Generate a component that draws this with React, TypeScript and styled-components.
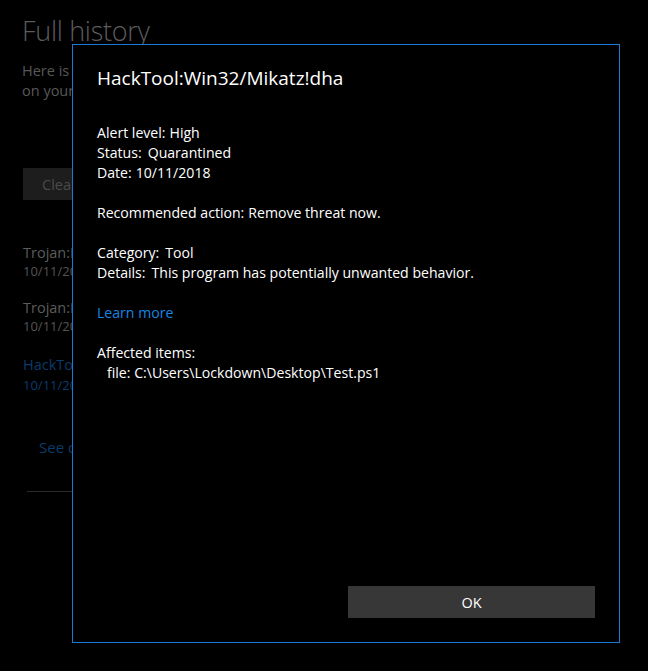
import React from "react";
import styled, { createGlobalStyle } from "styled-components";

const GlobalStyle = createGlobalStyle`
  html, body {
    margin: 0;
    padding: 0;
    background: #000;
  }
  body {
    font-family: "Open Sans", "Noto Sans", "Liberation Sans", sans-serif;
    -webkit-font-smoothing: antialiased;
  }
`;

type HistoryEntry = {
  name: string;
  date: string;
  selected?: boolean;
};

type Field = {
  label: string;
  value: string;
  wide?: boolean;
};

const history: HistoryEntry[] = [
  { name: "Trojan:PowerShell/Powersploit.H", date: "10/11/2018" },
  { name: "Trojan:PowerShell/Mimikatz.A", date: "10/11/2018" },
  { name: "HackTool:Win32/Mikatz!dha", date: "10/11/2018", selected: true },
];

const details: Field[][] = [
  [
    { label: "Alert level:", value: "High" },
    { label: "Status:", value: "Quarantined", wide: true },
    { label: "Date:", value: "10/11/2018" },
  ],
  [{ label: "Recommended action:", value: "Remove threat now." }],
  [
    { label: "Category:", value: "Tool", wide: true },
    { label: "Details:", value: "This program has potentially unwanted behavior.", wide: true },
  ],
];

const Screen = styled.div`
  position: relative;
  width: 648px;
  height: 671px;
  overflow: hidden;
  background: #000;
`;

const Page = styled.div`
  display: flex;
  flex-direction: column;
  padding: 12px 0 0 22px;
  width: 420px;
`;

const Heading = styled.h1`
  margin: 0;
  font-size: 27px;
  font-weight: 300;
  letter-spacing: -0.3px;
  line-height: 38px;
  color: #5c5c5c;
`;

const Intro = styled.p`
  margin: 11px 0 0;
  font-size: 14.5px;
  line-height: 20px;
  color: #585858;
`;

const ClearButton = styled.div`
  margin: 67px 0 0 1px;
  width: 150px;
  height: 32px;
  display: flex;
  align-items: center;
  padding-left: 19px;
  box-sizing: border-box;
  background: #1d1d1d;
  color: #4b4b4b;
  font-size: 14.5px;
`;

const HistoryList = styled.div`
  display: flex;
  flex-direction: column;
  gap: 18px;
  margin: 43px 0 0 1px;
`;

const HistoryItem = styled.div<{ $selected?: boolean }>`
  display: flex;
  flex-direction: column;
  margin-top: ${(p) => (p.$selected ? "2px" : "0")};
  color: ${(p) => (p.$selected ? "#0c3b6b" : "#5c5c5c")};
`;

const ItemName = styled.div`
  font-size: 14.5px;
  line-height: 20px;
`;

const ItemDate = styled.div<{ $selected?: boolean }>`
  font-size: 13px;
  line-height: 17px;
  margin-top: ${(p) => (p.$selected ? "2px" : "0")};
  color: ${(p) => (p.$selected ? "#0c3b6b" : "#545454")};
`;

const SeeMore = styled.div`
  margin: 43px 0 0 17px;
  font-size: 15px;
  line-height: 20px;
  color: #0c3b6b;
`;

const Divider = styled.div`
  margin: 34px 0 0 5px;
  height: 1px;
  width: 360px;
  background: #2a2a2a;
`;

const Dialog = styled.div`
  position: absolute;
  left: 72px;
  top: 44px;
  width: 548px;
  height: 599px;
  box-sizing: border-box;
  border: 1px solid #1a7ad4;
  background: #000;
  display: flex;
  flex-direction: column;
  padding: 19px 24px 24px;
  color: #fff;
`;

const Title = styled.h2`
  margin: 0;
  font-size: 19px;
  font-weight: 400;
  line-height: 28px;
  color: #fff;
`;

const Body = styled.div`
  margin-top: 31px;
  display: flex;
  flex-direction: column;
  gap: 20px;
  flex: 1;
  font-size: 14.1px;
  line-height: 20px;
`;

const Group = styled.div`
  display: flex;
  flex-direction: column;
`;

const Line = styled.div<{ $indent?: boolean }>`
  display: flex;
  padding-left: ${(p) => (p.$indent ? "10px" : "0")};
  white-space: pre;
`;

const Label = styled.span<{ $wide?: boolean }>`
  margin-right: ${(p) => (p.$wide ? "6px" : "4px")};
`;

const LearnMore = styled.a`
  color: #1a85e0;
  text-decoration: none;
  align-self: flex-start;
`;

const Footer = styled.div`
  display: grid;
  grid-template-columns: 1fr 1fr;
  gap: 4px;
`;

const OkButton = styled.button`
  grid-column: 2;
  height: 32px;
  border: none;
  background: #373737;
  color: #fff;
  font-family: inherit;
  font-size: 14.5px;
  padding: 0;
`;

export default function App() {
  return (
    <>
      <GlobalStyle />
      <Screen>
        <Page>
          <Heading>Full history</Heading>
          <Intro>
            Here is the full list of threats detected
            <br />
            on your device.
          </Intro>
          <ClearButton>Clear history</ClearButton>
          <HistoryList>
            {history.map((item) => (
              <HistoryItem key={item.name} $selected={item.selected}>
                <ItemName>{item.name}</ItemName>
                <ItemDate $selected={item.selected}>{item.date}</ItemDate>
              </HistoryItem>
            ))}
          </HistoryList>
          <SeeMore>See older items</SeeMore>
          <Divider />
        </Page>

        <Dialog>
          <Title>HackTool:Win32/Mikatz!dha</Title>
          <Body>
            {details.map((group, i) => (
              <Group key={i}>
                {group.map((field) => (
                  <Line key={field.label}>
                    <Label $wide={field.wide}>{field.label}</Label>
                    {field.value}
                  </Line>
                ))}
              </Group>
            ))}
            <LearnMore href="#">Learn more</LearnMore>
            <Group>
              <Line>Affected items:</Line>
              <Line $indent>file: C:\Users\Lockdown\Desktop\Test.ps1</Line>
            </Group>
          </Body>
          <Footer>
            <OkButton>OK</OkButton>
          </Footer>
        </Dialog>
      </Screen>
    </>
  );
}
